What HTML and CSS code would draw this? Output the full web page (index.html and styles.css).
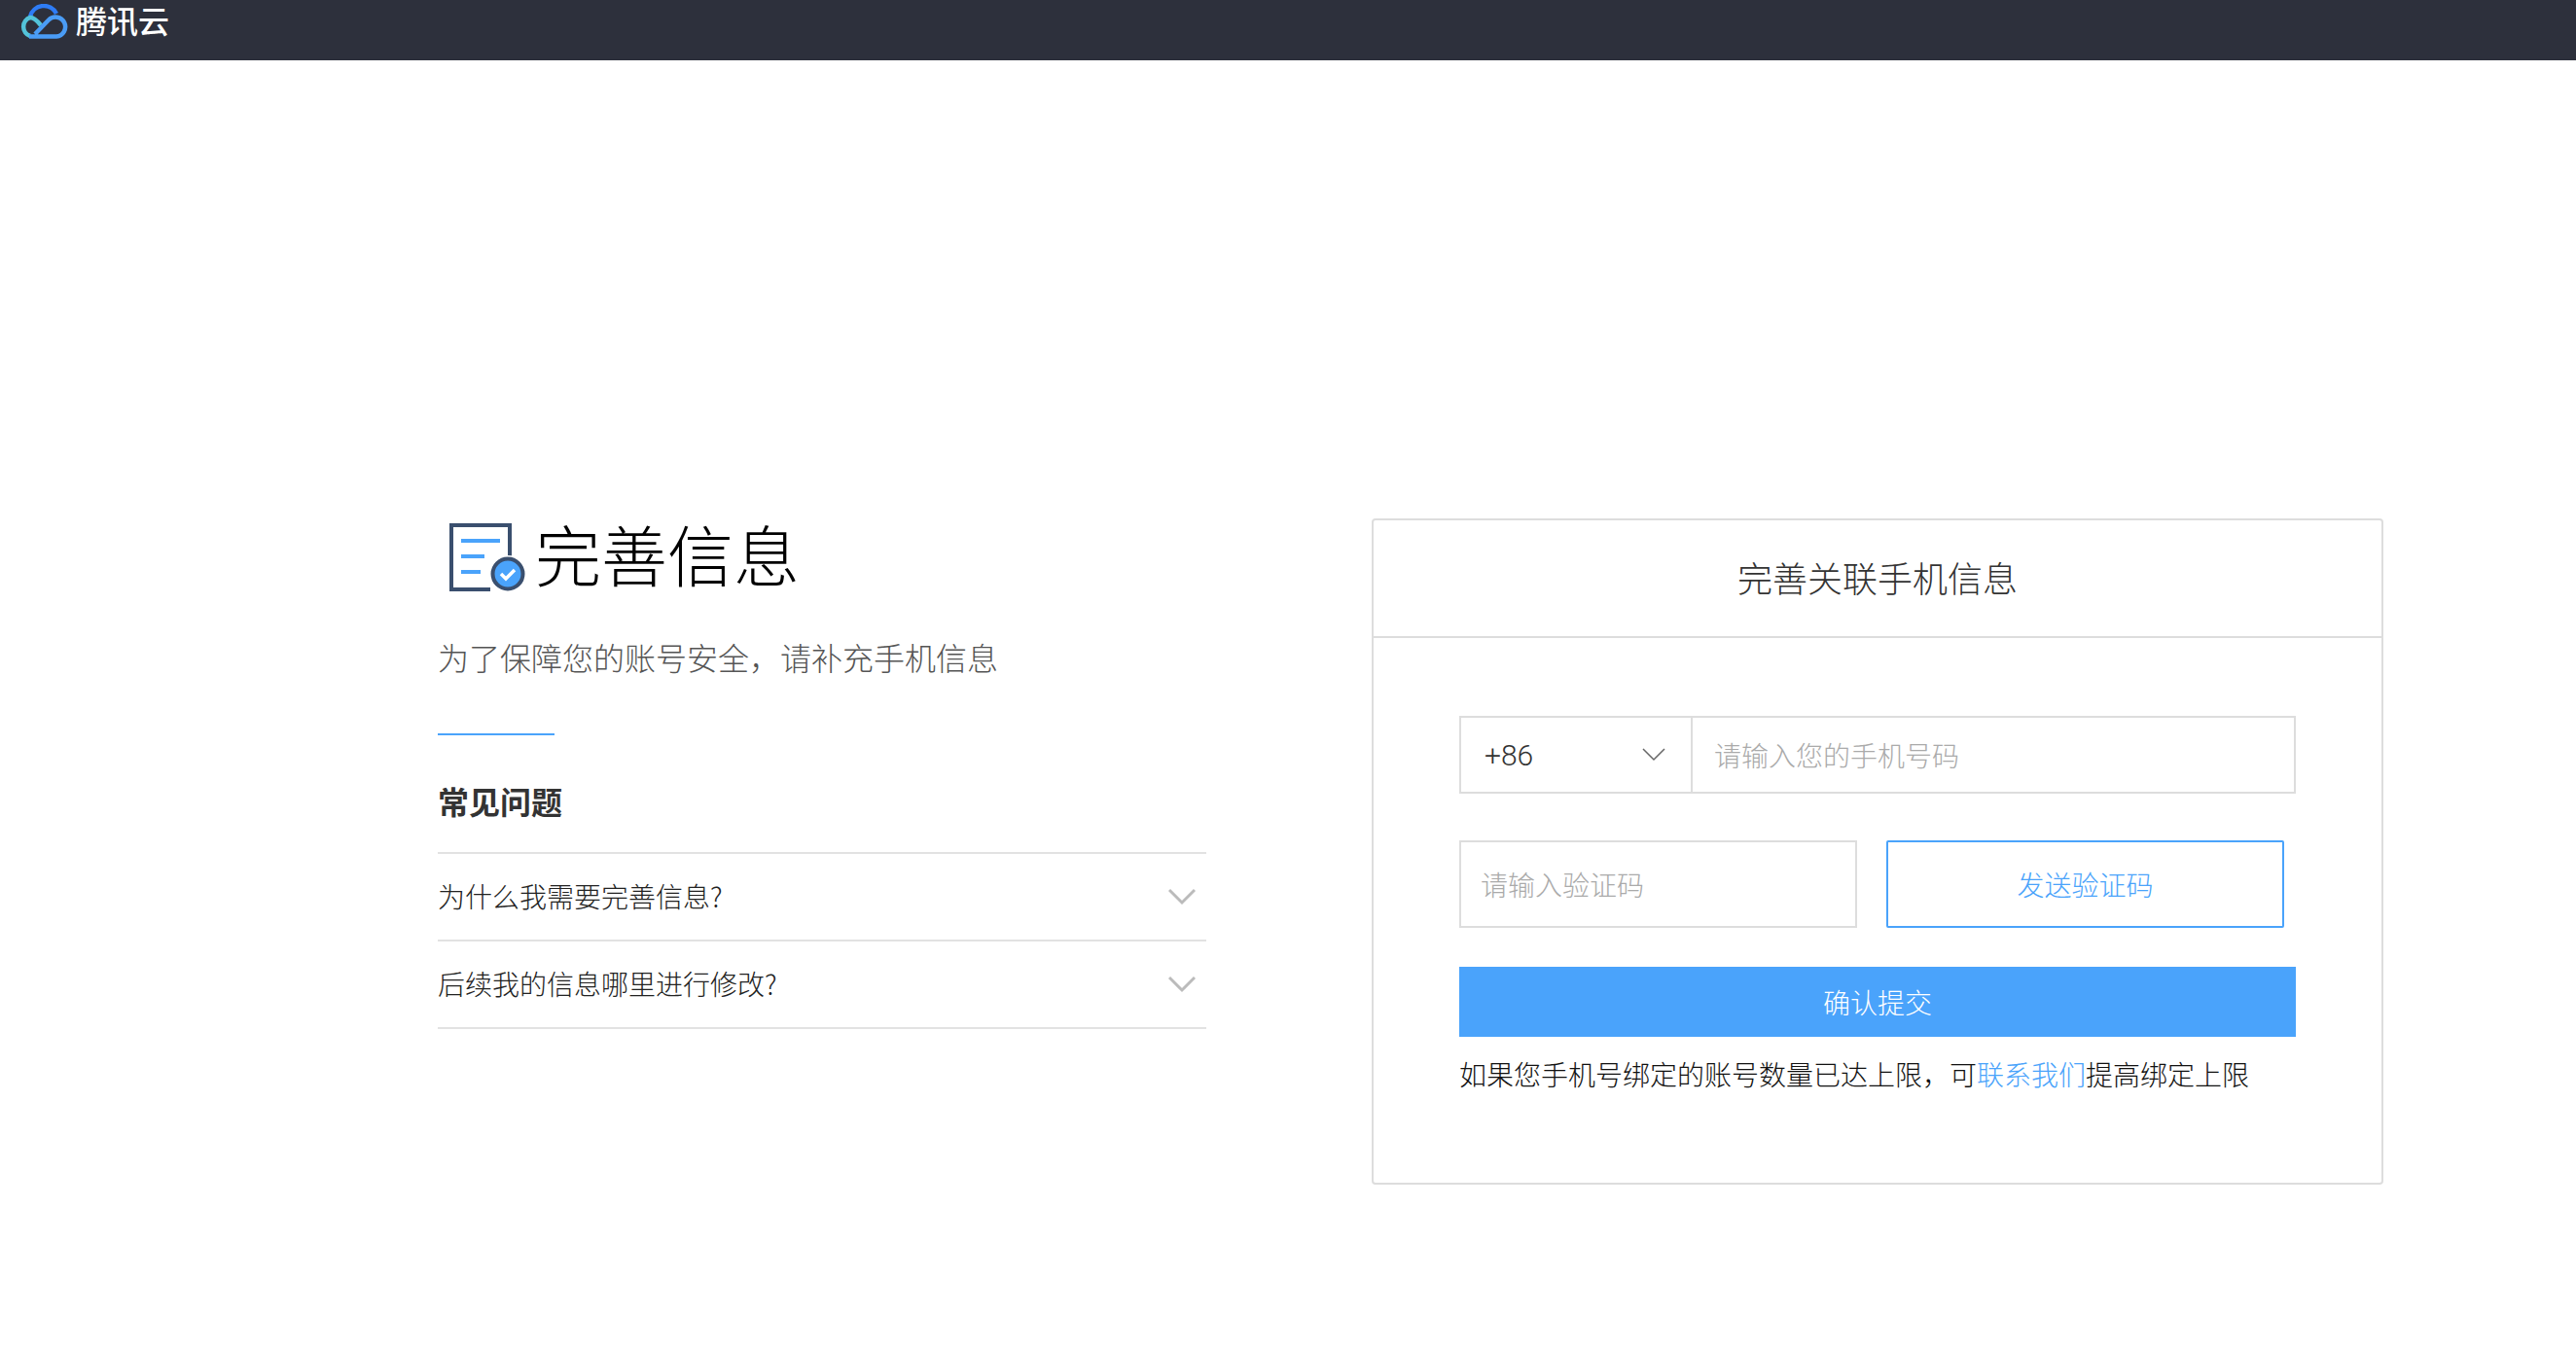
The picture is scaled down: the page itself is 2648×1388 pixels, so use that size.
FILE: index.html
```html
<!DOCTYPE html>
<html lang="zh-CN">
<head>
    <meta charset="UTF-8">
    <title>完善信息 - 腾讯云</title>
    <link rel="stylesheet" href="styles.css">
</head>
<body>

<header class="topbar">
    <svg class="logo-mark" width="50" height="36" viewBox="20 4 50 36" fill="none" stroke-width="4.500">
        <path d="M31 17 A14.500 14.500 0 0 1 58 14" stroke="#2e7cf6"/>
        <path d="M42 26 C38 21 35 18 31 18 A10 10 0 0 0 31 37" stroke="#53c3d9"/>
        <path d="M30 37.500 H58 A10 10 0 1 0 50 20.500 L36 35" stroke="#4a9cf6"/>
    </svg>
    <span class="logo-text">腾讯云</span>
</header>

<main class="page">
    <section class="intro">
        <div class="intro-title">
            <svg class="intro-icon" width="78" height="70" viewBox="0 0 78 70" fill="none">
                <path d="M42 68 H2 V2 H62 V36" stroke="#3a4f6e" stroke-width="4"/>
                <path d="M12 18 H52 M12 34 H36 M12 50 H32" stroke="#4aa3fb" stroke-width="4"/>
                <circle cx="60" cy="52" r="19" fill="#fff"/>
                <circle cx="60" cy="52" r="15.500" fill="#4aa3fb" stroke="#3a4f6e" stroke-width="4"/>
                <path d="M53 52 L58 57 L67 48" stroke="#fff" stroke-width="3.500"/>
            </svg>
            <h1>完善信息</h1>
        </div>
        <p class="intro-desc">为了保障您的账号安全&#xFF0C;请补充手机信息</p>
        <div class="intro-rule"></div>
        <h2>常见问题</h2>
        <ul class="faq">
            <li class="faq-item">
                <span class="faq-text">为什么我需要完善信息?</span>
                <svg width="28" height="18" viewBox="0 0 28 18" fill="none"><path d="M1 2 L14 15 L27 2" stroke="#bbb" stroke-width="3"/></svg>
            </li>
            <li class="faq-item">
                <span class="faq-text">后续我的信息哪里进行修改?</span>
                <svg width="28" height="18" viewBox="0 0 28 18" fill="none"><path d="M1 2 L14 15 L27 2" stroke="#bbb" stroke-width="3"/></svg>
            </li>
        </ul>
    </section>

    <section class="card">
        <div class="card-title">完善关联手机信息</div>
        <form class="card-form">
            <div class="phone-group">
                <div class="area-code">
                    <span>+86</span>
                    <svg width="24" height="14" viewBox="0 0 24 14" fill="none"><path d="M1 1 L12 12 L23 1" stroke="#666" stroke-width="1.500"/></svg>
                </div>
                <input class="phone-input" type="text" placeholder="请输入您的手机号码">
            </div>
            <div class="code-row">
                <input class="code-input" type="text" placeholder="请输入验证码">
                <button class="send-btn" type="button">发送验证码</button>
            </div>
            <button class="submit-btn" type="button">确认提交</button>
            <p class="note">如果您手机号绑定的账号数量已达上限&#xFF0C;可<a href="#">联系我们</a>提高绑定上限</p>
        </form>
    </section>
</main>

</body>
</html>
```

FILE: styles.css
```css
* {
    box-sizing: border-box;
}

body {
    margin: 0;
    background-color: #fff;
    color: #333;
    font-family: "Noto Sans CJK SC", "Liberation Sans", sans-serif;
    font-weight: 300;
}

.topbar {
    display: flex;
    align-items: flex-start;
    gap: 8px;
    height: 62px;
    padding: 4px 0 0 20px;
    background-color: #2d303c;
}

.logo-text {
    margin-top: -2px;
    color: #fff;
    font-size: 32px;
    font-weight: 500;
    line-height: 36px;
}

.page {
    display: flex;
    gap: 170px;
    padding: 471px 0 0 450px;
}

.intro {
    width: 790px;
}

.intro-title {
    display: flex;
    align-items: center;
    gap: 10px;
    height: 70px;
    margin: 5px 0 0 12px;
}

h1 {
    margin: 0 0 8px;
    color: #000;
    font-size: 68px;
    font-weight: 300;
    line-height: 70px;
}

.intro-desc {
    margin: 43px 0 0;
    color: #555;
    font-size: 32px;
    line-height: 48px;
}

.intro-rule {
    width: 120px;
    height: 2px;
    margin-top: 55px;
    background-color: #4aa3fb;
}

h2 {
    margin: 43px 0 0;
    color: #333;
    font-size: 32px;
    font-weight: 700;
    line-height: 48px;
}

.faq {
    margin: 29px 0 0;
    padding: 0;
    list-style: none;
    border-top: 2px solid #e2e2e2;
}

.faq-item {
    display: flex;
    justify-content: space-between;
    align-items: center;
    height: 90px;
    padding-right: 11px;
    border-bottom: 2px solid #e2e2e2;
    font-size: 28px;
}

.faq-text {
    margin-bottom: 3px;
    color: #222;
}

.card {
    width: 1040px;
    height: 685px;
    border: 2px solid #ddd;
    border-radius: 4px;
}

.card-title {
    height: 121px;
    border-bottom: 2px solid #ddd;
    font-size: 36px;
    line-height: 116px;
    text-align: center;
}

.card-form {
    padding: 80px 88px 0;
}

.phone-group {
    display: flex;
    height: 80px;
    border: 2px solid #ddd;
}

.area-code {
    display: flex;
    justify-content: space-between;
    align-items: center;
    width: 238px;
    padding: 0 26px 0 24px;
    border-right: 2px solid #ddd;
    font-family: Roboto, "Liberation Sans", sans-serif;
    font-size: 30px;
}

input {
    font-family: inherit;
    font-weight: 300;
    font-size: 28px;
    color: #333;
    outline: none;
}

input::placeholder {
    color: #aaa;
    opacity: 1;
}

.phone-input {
    flex: 1;
    min-width: 0;
    padding: 0 22px;
    border: none;
}

.code-row {
    display: flex;
    gap: 30px;
    margin-top: 48px;
}

.code-input {
    width: 409px;
    height: 90px;
    padding: 0 20px;
    border: 2px solid #ddd;
}

.send-btn {
    width: 409px;
    height: 90px;
    border: 2px solid #4aa3fb;
    border-radius: 2px;
    background-color: #fff;
    color: #4aa3fb;
    font-family: inherit;
    font-weight: 300;
    font-size: 28px;
}

.submit-btn {
    display: block;
    width: 100%;
    height: 72px;
    margin-top: 40px;
    border: none;
    background-color: #4aa3fb;
    color: #fff;
    font-family: inherit;
    font-weight: 300;
    font-size: 28px;
}

.note {
    margin: 17px 0 0;
    color: #111;
    font-size: 28px;
    line-height: 42px;
}

.note a {
    color: #4aa3fb;
    text-decoration: none;
}
```
